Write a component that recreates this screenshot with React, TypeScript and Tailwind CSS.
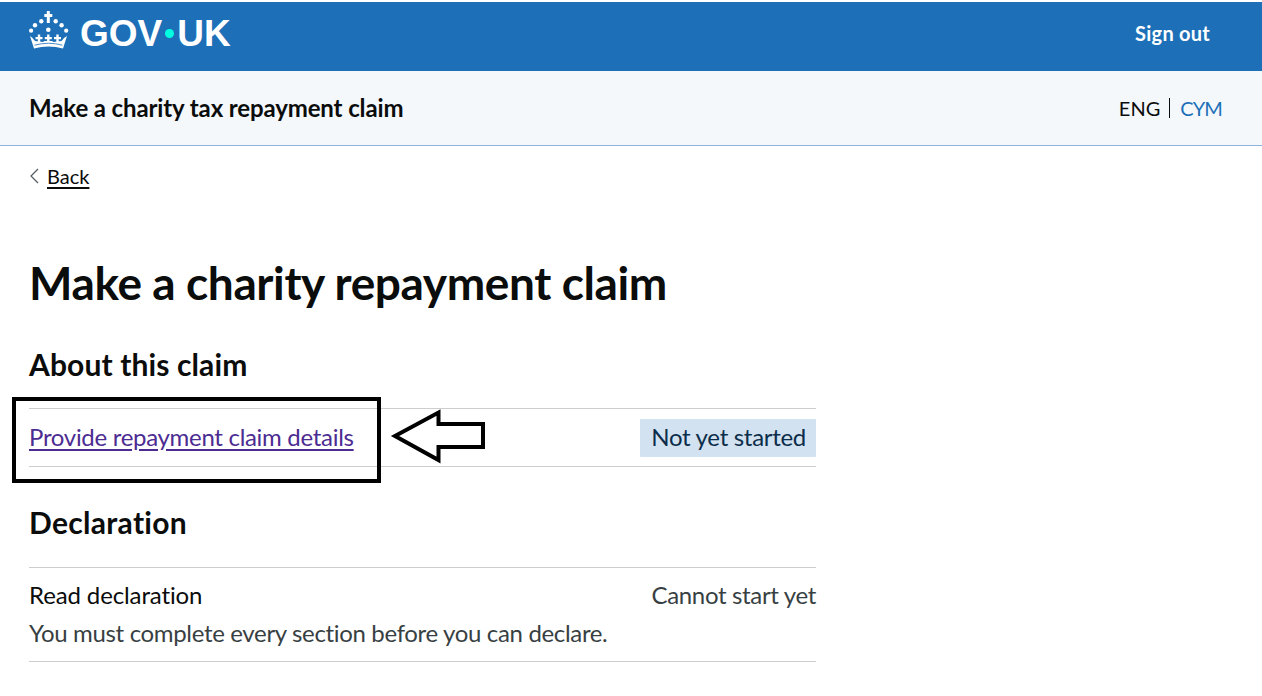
export default function App() {
  return (
    <div className="relative w-[1262px] h-[696px] overflow-hidden bg-white text-[#0b0c0c] font-['Lato','Liberation_Sans',sans-serif]">
      <header className="mt-[2px] h-[69px] bg-[#1d70b8] flex items-center justify-between pl-[29px] pr-[52px] pb-[6px] text-white">
        <div className="flex items-center gap-[11px]">
          <svg className="mb-[7px]" width="40" height="38" viewBox="0 0 40 38" fill="white">
            <rect x="17.8" y="0" width="3" height="12" />
            <rect x="15.3" y="3" width="8" height="3" />
            <circle cx="19.3" cy="18.7" r="2.3" />
            <circle cx="12.3" cy="10.3" r="2.2" />
            <circle cx="26.7" cy="10.3" r="2.2" />
            <circle cx="6" cy="14.3" r="2.2" />
            <circle cx="32.6" cy="14.3" r="2.2" />
            <circle cx="2.1" cy="19.7" r="2.1" />
            <circle cx="37.2" cy="19.7" r="2.1" />
            <path d="M1 25 L3.5 27 L6 30 L14 31 L15.5 30 L23 30 L24.5 31 L32.5 30 L35 27 L38 25 L34 37.5 Q19.5 33.5 5 37.5 Z" />
            <rect x="8.8" y="23.5" width="2.4" height="8" />
            <rect x="6.5" y="26" width="7" height="2.2" />
            <rect x="18.1" y="23.5" width="2.4" height="8" />
            <rect x="15.8" y="26" width="7" height="2.2" />
            <rect x="27.3" y="23.5" width="2.4" height="8" />
            <rect x="25" y="26" width="7" height="2.2" />
            <path d="M5.5 34.2 Q19.5 30.3 33.5 34.2" fill="none" stroke="#1d70b8" strokeWidth="0.8" />
          </svg>
          <div className="flex items-center text-[37px] font-bold leading-none font-['Liberation_Sans',sans-serif]">
            <span>GOV</span>
            <span className="mx-[3px] w-[9px] h-[9px] rounded-full bg-[#00ffe0]" />
            <span>UK</span>
          </div>
        </div>
        <a className="text-[20px] font-bold tracking-[0.25px] mb-[2px]">Sign out</a>
      </header>
      <div className="h-[75px] bg-[#f4f8fb] border-b border-[#8eb4dc] flex items-center justify-between pl-[29px] pr-[40px]">
        <div className="text-[24px] font-bold tracking-[-0.12px]">Make a charity tax repayment claim</div>
        <div className="flex items-center text-[20px]">
          <span>ENG</span>
          <span className="ml-[9px] mr-[10px] w-px h-[20px] bg-[#0b0c0c]" />
          <span className="text-[#1d70b8] tracking-[-0.9px]">CYM</span>
        </div>
      </div>
      <main className="w-[787px] ml-[29px]">
        <div className="flex items-center gap-[8px] mt-[17px] h-[26px] text-[20px]">
          <svg width="10" height="16" viewBox="0 0 10 16" fill="none" stroke="#505a5f" strokeWidth="1.2">
            <path d="M9 1 L2 8 L9 15" />
          </svg>
          <a className="underline underline-offset-[3px]">Back</a>
        </div>
        <h1 className="mt-[66px] text-[46px] leading-[56px] font-bold tracking-[-0.4px]">Make a charity repayment claim</h1>
        <h2 className="mt-[33px] text-[30px] leading-[40px] font-bold tracking-[0.12px]">About this claim</h2>
        <div className="mt-[24px] h-[59px] border-y border-[#cecece] flex items-center justify-between text-[24px] tracking-[-0.3px]">
          <a className="text-[#4c2c92] underline underline-offset-[3px] mb-[2px]">Provide repayment claim details</a>
          <span className="bg-[#d2e2f1] text-[#0c2d4a] h-[38px] pl-[11px] pr-[10px] pb-[2px] flex items-center rounded-[1px]">Not yet started</span>
        </div>
        <h2 className="mt-[35px] text-[30px] leading-[40px] font-bold tracking-[0.3px]">Declaration</h2>
        <div className="mt-[25px] h-[95px] border-y border-[#cecece] pt-[8px] text-[24px] leading-[38px] text-[#383f43] tracking-[-0.34px]">
          <div className="flex justify-between">
            <span className="text-[#0b0c0c] tracking-[-0.12px]">Read declaration</span>
            <span>Cannot start yet</span>
          </div>
          <div>You must complete every section before you can declare.</div>
        </div>
      </main>
      <div className="absolute left-[12px] top-[397px] w-[369px] h-[86px] border-[4px] border-black" />
      <svg className="absolute left-[390px] top-[406px]" width="98" height="60" viewBox="0 0 98 60" fill="white" stroke="black" strokeWidth="4">
        <path d="M5 30 L48.5 6.5 L48.5 18 L93 18 L93 41 L48.5 41 L48.5 54 Z" />
      </svg>
    </div>
  );
}
